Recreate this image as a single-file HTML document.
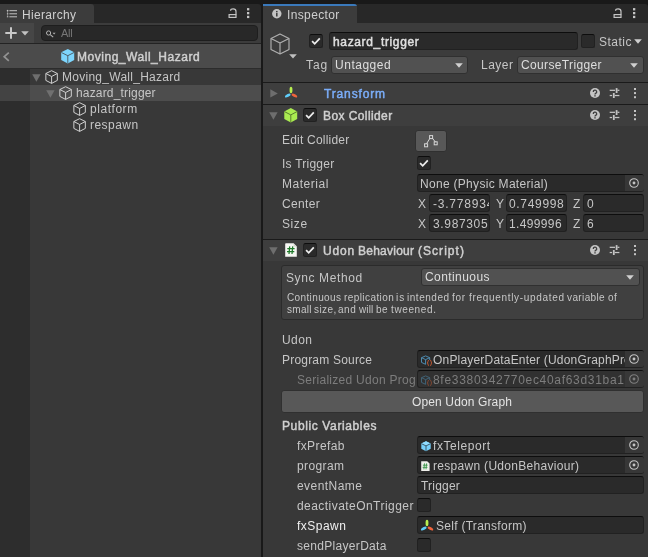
<!DOCTYPE html>
<html><head><meta charset="utf-8"><title>Unity Inspector</title>
<style>
html,body{margin:0;padding:0;}
body{width:648px;height:557px;position:relative;overflow:hidden;background:#383838;font-family:'Liberation Sans',sans-serif;}
.b{position:absolute;box-sizing:border-box;}
.t{position:absolute;will-change:transform;white-space:pre;line-height:16px;font-family:'Liberation Sans',sans-serif;}
.clip{position:absolute;left:0;top:0;height:557px;overflow:hidden;}
svg{position:absolute;overflow:visible;}
.fld{position:absolute;box-sizing:border-box;background:#2a2a2a;border:1px solid #212121;border-top-color:#0d0d0d;border-radius:3px;}
.dd{position:absolute;box-sizing:border-box;background:#515151;border:1px solid #303030;border-radius:3px;}
.cb{position:absolute;box-sizing:border-box;width:14px;height:14px;background:#2a2a2a;border:1px solid #212121;border-top-color:#0d0d0d;border-radius:2.5px;}
.pick{position:absolute;box-sizing:border-box;width:18.5px;height:16px;background:#373737;border-radius:0 2px 2px 0;}
.hline{position:absolute;left:263px;width:385px;height:1px;background:#1a1a1a;}
.chead{position:absolute;left:263px;width:385px;background:#3e3e3e;}

</style></head>
<body>
<!-- global bars -->
<div class="b" style="left:0;top:0;width:648px;height:23px;background:#191919"></div>
<div class="b" style="left:0;top:4px;width:261px;height:19px;background:#282828;border-radius:0 3px 0 0"></div>
<div class="b" style="left:263px;top:4px;width:385px;height:19px;background:#282828;border-radius:0 3px 0 0"></div>

<!-- HIERARCHY -->
<div class="b" style="left:0;top:4px;width:93.5px;height:19px;background:#3c3c3c;border-radius:0 3px 0 0"></div>
<div class="b" style="left:0;top:23px;width:261px;height:20px;background:#3c3c3c"></div>
<div class="b" style="left:0;top:23px;width:34px;height:20px;background:#464646"></div>
<div class="b" style="left:0;top:43px;width:261px;height:1px;background:#232323"></div>
<div class="b" style="left:41px;top:25px;width:217px;height:16px;background:#282828;border:1px solid #1e1e1e;border-radius:4px"></div>
<div class="b" style="left:0;top:44px;width:261px;height:24px;background:#4b4b4b"></div>
<div class="b" style="left:0;top:68px;width:261px;height:1px;background:#2c2c2c"></div>
<div class="b" style="left:0;top:69px;width:261px;height:488px;background:#383838"></div>
<div class="b" style="left:0;top:69px;width:30px;height:488px;background:#2d2d2d"></div>
<div class="b" style="left:0;top:85px;width:261px;height:16px;background:#4d4d4d"></div>
<div class="b" style="left:0;top:85px;width:30px;height:16px;background:#434343"></div>
<!-- divider -->
<div class="b" style="left:261px;top:4px;width:2px;height:553px;background:#191919"></div>

<!-- hierarchy tab icon -->
<svg style="left:6px;top:9px" width="12" height="10" viewBox="0 0 12 10"><g stroke="#c4c4c4" stroke-width="1" fill="none"><path d="M3.4 1.7H11M3.4 4.8H11M3.4 7.8H11"/><path d="M0.8 1.7H2.4M1.6 0.9V2.5M0.9 4.8H2.3M0.9 7.8H2.3" /><path d="M1.6 2.5V7.8" stroke-opacity=".45"/></g></svg>
<!-- plus -->
<svg style="left:5px;top:27px" width="12" height="12" viewBox="0 0 12 12"><path d="M6 0.3V11.7M0.3 6H11.7" stroke="#c8c8c8" stroke-width="2" fill="none"/></svg>
<svg style="left:21.2px;top:30.8px" width="8" height="5" viewBox="0 0 8 5"><path d="M0.2 0.2H7.8L4 4.6Z" fill="#c2c2c2"/></svg>
<!-- search icon -->
<svg style="left:45.5px;top:29.5px" width="10" height="8" viewBox="0 0 10 8"><circle cx="2.6" cy="3" r="2.1" stroke="#b4b4b4" stroke-width="1" fill="none"/><path d="M4.2 4.6L7.2 7.2" stroke="#b4b4b4" stroke-width="1.1"/><path d="M6.6 2.7H9.6L8.1 4.5Z" fill="#b4b4b4"/></svg>
<!-- lock -->
<svg style="left:227.9px;top:7.7px" width="9" height="10" viewBox="0 0 9 10"><rect x="1.1" y="6.6" width="6.9" height="2.8" stroke="#c4c4c4" stroke-width="1.2" fill="none"/><path d="M2.5 2.7Q2.7 0.9 5.1 0.9Q8 0.9 8 3.4V6.6" stroke="#c4c4c4" stroke-width="1.2" fill="none"/></svg>
<!-- kebab -->
<svg style="left:247px;top:7.9px" width="3" height="11" viewBox="0 0 3 11"><g fill="#c4c4c4"><rect x="0" y="0.1" width="2.3" height="2.3"/><rect x="0" y="4" width="2.3" height="2.3"/><rect x="0" y="7.8" width="2.3" height="2.3"/></g></svg>
<!-- back arrow -->
<svg style="left:3px;top:52px" width="7" height="10" viewBox="0 0 7 10"><path d="M5.8 0.6L1.2 4.7L5.8 8.8" stroke="#939393" stroke-width="1.7" fill="none"/></svg>
<!-- prefab blue cube -->
<svg style="left:60.6px;top:48.8px" width="13.6" height="14.5" viewBox="0 0 14 14.5" preserveAspectRatio="none"><path d="M7 0.1L13.6 3.3V10.9L7 14.4L0.2 10.9V3.3Z" fill="#7dd5fd"/><path d="M0.4 3.5L7 6.7L13.4 3.5M7 6.7V14.2" stroke="#46525a" stroke-width="0.9" fill="none"/></svg>

<!-- tree rows: foldouts + cube icons -->
<svg style="left:32px;top:74.3px" width="9" height="8" viewBox="0 0 9 8"><path d="M0.2 0.3H8.6L4.4 7.8Z" fill="#6e6e6e"/></svg>
<svg style="left:46px;top:90.3px" width="9" height="8" viewBox="0 0 9 8"><path d="M0.2 0.3H8.6L4.4 7.8Z" fill="#707070"/></svg>
<svg class="oc" style="left:44.8px;top:70px" width="13.2" height="14" viewBox="0 0 14 14" preserveAspectRatio="none"><use href="#ocube"/></svg>
<svg class="oc" style="left:58.8px;top:86px" width="13.2" height="14" viewBox="0 0 14 14" preserveAspectRatio="none"><use href="#ocube"/></svg>
<svg class="oc" style="left:72.8px;top:102px" width="13.2" height="14" viewBox="0 0 14 14" preserveAspectRatio="none"><use href="#ocube"/></svg>
<svg class="oc" style="left:72.8px;top:118px" width="13.2" height="14" viewBox="0 0 14 14" preserveAspectRatio="none"><use href="#ocube"/></svg>
<svg width="0" height="0" style="left:0;top:0"><defs>
 <g id="ocube" fill="none" stroke="#d4d4d4" stroke-width="1" stroke-linejoin="round"><path d="M7 0.7L13.1 3.5V10.4L7 13.4L0.9 10.4V3.5Z"/><path d="M0.9 3.5L7 6.5L13.1 3.5M7 6.5V13.4"/></g>
 <g id="chk" fill="none" stroke="#ececec" stroke-width="1.75"><path d="M3.1 7.1L5.7 9.8L10.8 4.3"/></g>
 <g id="help"><circle cx="5" cy="5" r="5" fill="#c4c4c4"/><path d="M3.3 4A1.7 1.7 0 1 1 5.6 5.4Q5 5.8 5 6.5" stroke="#3e3e3e" stroke-width="1.3" fill="none"/><rect x="4.3" y="7.2" width="1.4" height="1.3" fill="#3e3e3e"/></g>
 <g id="sliders" fill="#c4c4c4"><rect x="0.7" y="1.7" width="5.3" height="1.25"/><rect x="6.7" y="0.1" width="1.8" height="4.9"/><rect x="8.5" y="1.7" width="1.9" height="1.25"/><rect x="0.7" y="6.9" width="2.4" height="1.25"/><rect x="3.9" y="5" width="1.8" height="5"/><rect x="5.7" y="6.9" width="4.7" height="1.25"/></g>
 <g id="kebab" fill="#c4c4c4"><rect x="0" y="0" width="2" height="2"/><rect x="0" y="4.1" width="2" height="2"/><rect x="0" y="8.2" width="2" height="2"/></g>
 <g id="picker"><circle cx="5" cy="5" r="4.3" stroke="#c4c4c4" stroke-width="1.1" fill="none"/><circle cx="5" cy="5" r="1.45" fill="#c4c4c4"/></g>
 <g id="xform"><ellipse cx="6" cy="3.95" rx="1.45" ry="3.2" fill="#b9f050"/><ellipse cx="2.75" cy="9.6" rx="3.15" ry="1.4" transform="rotate(-27 2.75 9.6)" fill="#5fcdfa"/><ellipse cx="9.45" cy="9.6" rx="3.15" ry="1.4" transform="rotate(27 9.45 9.6)" fill="#f0643c"/></g>
 <g id="ddarrow"><path d="M0.2 0.2H7.8L4 4.8Z" fill="#d0d0d0"/></g>
</defs></svg>

<!-- INSPECTOR -->
<div class="b" style="left:263px;top:4px;width:93.5px;height:19px;background:#3c3c3c;border-radius:0 3px 0 0;overflow:hidden"><div style="height:2px;background:#3a79bb"></div></div>
<div class="b" style="left:263px;top:23px;width:385px;height:59px;background:#3c3c3c"></div>
<div class="hline" style="top:82px"></div>
<div class="chead" style="top:83px;height:21px"></div>
<div class="hline" style="top:104px"></div>
<div class="chead" style="top:105px;height:21px"></div>
<div class="hline" style="top:239px"></div>
<div class="chead" style="top:240px;height:21px"></div>

<!-- info icon -->
<svg style="left:272.3px;top:9px" width="9.6" height="9.6" viewBox="0 0 10 10"><circle cx="5" cy="5" r="4.9" fill="#c4c4c4"/><rect x="4.2" y="4.2" width="1.6" height="3.6" fill="#3c3c3c"/><rect x="4.2" y="2" width="1.6" height="1.5" fill="#3c3c3c"/></svg>
<!-- lock / kebab -->
<svg style="left:613.3px;top:7.7px" width="9" height="10" viewBox="0 0 9 10"><rect x="1.1" y="6.6" width="6.9" height="2.8" stroke="#c4c4c4" stroke-width="1.2" fill="none"/><path d="M2.5 2.7Q2.7 0.9 5.1 0.9Q8 0.9 8 3.4V6.6" stroke="#c4c4c4" stroke-width="1.2" fill="none"/></svg>
<svg style="left:632.9px;top:7.9px" width="3" height="11" viewBox="0 0 3 11"><g fill="#c4c4c4"><rect x="0" y="0.1" width="2.3" height="2.3"/><rect x="0" y="4" width="2.3" height="2.3"/><rect x="0" y="7.8" width="2.3" height="2.3"/></g></svg>
<!-- big cube -->
<svg style="left:269.8px;top:33px" width="20" height="22" viewBox="0 0 20 22"><g fill="none" stroke="#b0b0b0" stroke-width="1.15" stroke-linejoin="round"><path d="M10 1L19 5.4V16.4L10 21L1 16.4V5.4Z"/><path d="M1 5.4L10 10L19 5.4M10 10V21"/></g></svg>
<svg style="left:288.7px;top:54px" width="8" height="5" viewBox="0 0 8 5"><path d="M0.2 0.2H7.8L4 4.6Z" fill="#c0c0c0"/></svg>
<!-- GO checkbox -->
<div class="cb" style="left:309px;top:34px"></div>
<svg style="left:309px;top:34px" width="14" height="14" viewBox="0 0 14 14"><use href="#chk"/></svg>
<!-- name field -->
<div class="fld" style="left:329px;top:32px;width:249px;height:18px"></div>
<!-- static -->
<div class="cb" style="left:581px;top:34px"></div>
<svg style="left:634px;top:39px" width="8" height="5" viewBox="0 0 8 5"><use href="#ddarrow"/></svg>
<!-- tag/layer -->
<div class="dd" style="left:331px;top:56px;width:137px;height:18px"></div>
<svg style="left:454.5px;top:63px" width="8" height="5" viewBox="0 0 8 5"><use href="#ddarrow"/></svg>
<div class="dd" style="left:517px;top:56px;width:127px;height:18px"></div>
<svg style="left:630px;top:63px" width="8" height="5" viewBox="0 0 8 5"><use href="#ddarrow"/></svg>

<!-- Transform header -->
<svg style="left:270px;top:89px" width="8" height="9" viewBox="0 0 8 9"><path d="M0.3 0.2V8.6L7.8 4.4Z" fill="#6e6e6e"/></svg>
<svg style="left:285px;top:86px" width="13" height="12" viewBox="0 0 13 12"><use href="#xform"/></svg>
<svg style="left:590px;top:88px" width="10" height="10" viewBox="0 0 10 10"><use href="#help"/></svg>
<svg style="left:608.8px;top:88px" width="11" height="10" viewBox="0 0 11 10"><use href="#sliders"/></svg>
<svg style="left:633.8px;top:88px" width="2" height="11" viewBox="0 0 2 11"><use href="#kebab"/></svg>

<!-- Box Collider header -->
<svg style="left:269px;top:112px" width="9" height="8" viewBox="0 0 9 8"><path d="M0.2 0.3H8.6L4.4 7.8Z" fill="#6e6e6e"/></svg>
<svg style="left:283.6px;top:107.7px" width="13.6" height="14.6" viewBox="0 0 14 14.6" preserveAspectRatio="none"><path d="M7 0.1L13.6 3.4V11L7 14.5L0.3 11V3.4Z" fill="#aaeb50"/><path d="M0.5 3.6L7 6.9L13.4 3.6M7 6.9V14.3" stroke="#4f6e2c" stroke-width="0.9" fill="none"/></svg>
<div class="cb" style="left:303px;top:108px"></div>
<svg style="left:303px;top:108px" width="14" height="14" viewBox="0 0 14 14"><use href="#chk"/></svg>
<svg style="left:590px;top:110px" width="10" height="10" viewBox="0 0 10 10"><use href="#help"/></svg>
<svg style="left:608.8px;top:110px" width="11" height="10" viewBox="0 0 11 10"><use href="#sliders"/></svg>
<svg style="left:633.8px;top:110px" width="2" height="11" viewBox="0 0 2 11"><use href="#kebab"/></svg>

<!-- BC body -->
<div class="b" style="left:415px;top:130px;width:32px;height:22px;background:#585858;border:1px solid #303030;border-radius:3px"></div>
<svg style="left:424px;top:134.5px" width="14" height="13" viewBox="0 0 14 13"><g stroke="#d8d8d8" stroke-width="1" fill="none"><path d="M2.5 8.8L6 3.2M8.4 3.2L11.5 7.2"/><rect x="5.6" y="0.6" width="3" height="3"/><rect x="0.6" y="8.8" width="3" height="3"/><rect x="10.2" y="6.8" width="3" height="3"/></g></svg>
<div class="cb" style="left:417px;top:156px"></div>
<svg style="left:417px;top:156px" width="14" height="14" viewBox="0 0 14 14"><use href="#chk"/></svg>
<div class="fld" style="left:417px;top:174px;width:227px;height:18px"></div>
<div class="pick" style="left:625px;top:175px"></div>
<svg style="left:629px;top:178px" width="10" height="10" viewBox="0 0 10 10"><use href="#picker"/></svg>
<div class="fld" style="left:429px;top:194px;width:61px;height:18px"></div>
<div class="fld" style="left:506px;top:194px;width:61px;height:18px"></div>
<div class="fld" style="left:583px;top:194px;width:61px;height:18px"></div>
<div class="fld" style="left:429px;top:214px;width:61px;height:18px"></div>
<div class="fld" style="left:506px;top:214px;width:61px;height:18px"></div>
<div class="fld" style="left:583px;top:214px;width:61px;height:18px"></div>

<!-- Udon header -->
<svg style="left:269px;top:246.5px" width="9" height="8" viewBox="0 0 9 8"><path d="M0.2 0.3H8.6L4.4 7.8Z" fill="#6e6e6e"/></svg>
<svg style="left:285px;top:242.8px" width="12" height="14" viewBox="0 0 12 14"><path d="M0.9 0.2H8.6L11.8 3.4V13.8H0.2V0.9Q0.2 0.2 0.9 0.2Z" fill="#f6f6f3"/><path d="M8.6 0.2V3.4H11.8Z" fill="#cfcfca"/><g stroke="#1f7a2a" stroke-width="1.25" fill="none"><path d="M4.7 3.4L4 11M7.7 3.4L7 11M2.3 5.7H9.6M2 8.7H9.3"/></g></svg>
<div class="cb" style="left:303px;top:243px"></div>
<svg style="left:303px;top:243px" width="14" height="14" viewBox="0 0 14 14"><use href="#chk"/></svg>
<svg style="left:590px;top:245px" width="10" height="10" viewBox="0 0 10 10"><use href="#help"/></svg>
<svg style="left:608.8px;top:245px" width="11" height="10" viewBox="0 0 11 10"><use href="#sliders"/></svg>
<svg style="left:633.8px;top:245px" width="2" height="11" viewBox="0 0 2 11"><use href="#kebab"/></svg>

<!-- help box -->
<div class="b" style="left:281px;top:265px;width:362.5px;height:54.5px;background:#404040;border:1px solid #2b2b2b;border-radius:3px"></div>
<div class="dd" style="left:421px;top:268px;width:219px;height:18px"></div>
<svg style="left:626px;top:275px" width="8" height="5" viewBox="0 0 8 5"><use href="#ddarrow"/></svg>

<!-- Udon fields -->
<div class="fld" style="left:417px;top:350px;width:227px;height:18px"></div>
<div class="pick" style="left:625px;top:351px"></div>
<svg style="left:629px;top:354px" width="10" height="10" viewBox="0 0 10 10"><use href="#picker"/></svg>
<div class="fld" style="left:417px;top:370px;width:227px;height:18px;background:#313131"></div>
<div class="pick" style="left:625px;top:371px;background:#383838"></div>
<svg style="left:629px;top:374px;opacity:.5" width="10" height="10" viewBox="0 0 10 10"><use href="#picker"/></svg>
<svg style="left:421px;top:354.5px" width="12" height="11" viewBox="0 0 12 11"><use href="#udonasset"/></svg>
<svg style="left:421px;top:374.5px;opacity:.55" width="12" height="11" viewBox="0 0 12 11"><use href="#udonasset"/></svg>
<svg width="0" height="0" style="left:0;top:0"><defs>
 <g id="udonasset" fill="none"><g stroke="#4f8fb6" stroke-width="0.95" stroke-linejoin="round"><path d="M4.6 0.9L8.7 2.7V5M4.6 0.9L0.5 2.7V7.4L4.6 9.3V4.6L8.7 2.7M0.5 2.7L4.6 4.6"/></g><g stroke="#cf5c33" stroke-width="0.95"><path d="M7.9 5.3Q6.9 5.3 7 6.4Q7.1 7.7 6.1 7.9Q7.1 8.1 7 9.4Q6.9 10.5 7.9 10.5M9.2 5.3Q10.2 5.3 10.1 6.4Q10 7.7 11 7.9Q10 8.1 10.1 9.4Q10.2 10.5 9.2 10.5"/></g></g>
 <g id="pfcube"><path d="M5 0.2L9.7 2.5V7.8L5 10.2L0.3 7.8V2.5Z" fill="#78d0fb"/><path d="M5 0.2L9.7 2.5L5 4.9L0.3 2.5Z" fill="#8fdcff"/><path d="M0.5 2.7L5 4.9L9.5 2.7M5 4.9V10" stroke="#2a3f4c" stroke-width="0.8" fill="none"/></g>
 <g id="smscript"><path d="M0.2 0.2H6.2L8.6 2.6V9.9H0.2Z" fill="#efefea"/><g stroke="#3a9448" stroke-width="0.9" fill="none"><path d="M3.5 2.4L2.9 8.3M5.6 2.4L5 8.3M1.9 4.2H6.6M1.7 6.4H6.4"/></g></g>
</defs></svg>

<!-- button -->
<div class="b" style="left:281px;top:390px;width:363px;height:23px;background:#585858;border:1px solid #303030;border-radius:3px"></div>

<!-- public variables -->
<div class="fld" style="left:417px;top:436px;width:227px;height:18px"></div>
<div class="pick" style="left:625px;top:437px"></div>
<svg style="left:629px;top:440px" width="10" height="10" viewBox="0 0 10 10"><use href="#picker"/></svg>
<svg style="left:420.8px;top:440.8px" width="10" height="10" viewBox="0 0 10 10"><use href="#pfcube"/></svg>
<div class="fld" style="left:417px;top:456px;width:227px;height:18px"></div>
<div class="pick" style="left:625px;top:457px"></div>
<svg style="left:629px;top:460px" width="10" height="10" viewBox="0 0 10 10"><use href="#picker"/></svg>
<svg style="left:421.4px;top:460.8px" width="9" height="10" viewBox="0 0 9 10"><use href="#smscript"/></svg>
<div class="fld" style="left:417px;top:476px;width:227px;height:18px"></div>
<div class="cb" style="left:417px;top:497.5px"></div>
<div class="fld" style="left:417px;top:516px;width:227px;height:18px"></div>
<svg style="left:421.3px;top:519.2px" width="13" height="12" viewBox="0 0 13 12"><use href="#xform"/></svg>
<div class="cb" style="left:417px;top:537.5px"></div>

<span class="t" style="left:22.0px;top:7px;font-size:12px;font-weight:400;color:#cfcfcf;letter-spacing:0.33px">Hierarchy</span>
<span class="t" style="left:61.0px;top:25px;font-size:11px;font-weight:400;color:#777777;letter-spacing:-0.27px">All</span>
<span class="t" style="left:77.0px;top:49px;font-size:12px;font-weight:400;-webkit-text-stroke:0.45px #d0d0d0;color:#d0d0d0;letter-spacing:0.53px">Moving_Wall_Hazard</span>
<span class="t" style="left:62.0px;top:69px;font-size:12px;font-weight:400;color:#c6c6c6;letter-spacing:0.27px">Moving_Wall_Hazard</span>
<span class="t" style="left:76.0px;top:85px;font-size:12px;font-weight:400;color:#c6c6c6;letter-spacing:0.17px">hazard_trigger</span>
<span class="t" style="left:90.0px;top:101px;font-size:12px;font-weight:400;color:#c6c6c6;letter-spacing:0.54px">platform</span>
<span class="t" style="left:90.0px;top:117px;font-size:12px;font-weight:400;color:#c6c6c6;letter-spacing:0.46px">respawn</span>
<span class="t" style="left:287.0px;top:7px;font-size:12px;font-weight:400;color:#cfcfcf;letter-spacing:0.37px">Inspector</span>
<span class="t" style="left:333.0px;top:34px;font-size:12px;font-weight:400;-webkit-text-stroke:0.45px #e0e0e0;color:#e0e0e0;letter-spacing:0.65px">hazard_trigger</span>
<span class="t" style="left:599.0px;top:34px;font-size:12px;font-weight:400;color:#c6c6c6;letter-spacing:0.49px">Static</span>
<span class="t" style="left:306.0px;top:57px;font-size:12px;font-weight:400;color:#c6c6c6;letter-spacing:0.89px">Tag</span>
<span class="t" style="left:335.0px;top:57px;font-size:12px;font-weight:400;color:#dedede;letter-spacing:0.52px">Untagged</span>
<span class="t" style="left:481.0px;top:57px;font-size:12px;font-weight:400;color:#c6c6c6;letter-spacing:0.48px">Layer</span>
<span class="t" style="left:521.0px;top:57px;font-size:12px;font-weight:400;color:#dedede;letter-spacing:0.36px">CourseTrigger</span>
<span class="t" style="left:324.0px;top:86px;font-size:12px;font-weight:400;-webkit-text-stroke:0.45px #7baefa;color:#7baefa;letter-spacing:0.85px">Transform</span>
<span class="t" style="left:323.0px;top:108px;font-size:12px;font-weight:400;-webkit-text-stroke:0.45px #d0d0d0;color:#d0d0d0;letter-spacing:0.41px">Box Collider</span>
<span class="t" style="left:282.0px;top:132px;font-size:12px;font-weight:400;color:#c6c6c6;letter-spacing:0.21px">Edit Collider</span>
<span class="t" style="left:282.0px;top:156px;font-size:12px;font-weight:400;color:#c6c6c6;letter-spacing:0.24px">Is Trigger</span>
<span class="t" style="left:282.0px;top:176px;font-size:12px;font-weight:400;color:#c6c6c6;letter-spacing:0.52px">Material</span>
<span class="t" style="left:282.0px;top:196px;font-size:12px;font-weight:400;color:#c6c6c6;letter-spacing:0.34px">Center</span>
<span class="t" style="left:282.0px;top:216px;font-size:12px;font-weight:400;color:#c6c6c6;letter-spacing:0.57px">Size</span>
<span class="t" style="left:420.0px;top:176px;font-size:12px;font-weight:400;color:#c6c6c6;letter-spacing:0.30px">None (Physic Material)</span>
<span class="t" style="left:418.0px;top:196px;font-size:12px;font-weight:400;color:#c6c6c6;letter-spacing:-0.80px">X</span>
<span class="t" style="left:496.0px;top:196px;font-size:12px;font-weight:400;color:#c6c6c6;letter-spacing:-1.20px">Y</span>
<span class="t" style="left:573.0px;top:196px;font-size:12px;font-weight:400;color:#c6c6c6;letter-spacing:-0.20px">Z</span>
<span class="t" style="left:418.0px;top:216px;font-size:12px;font-weight:400;color:#c6c6c6;letter-spacing:-0.80px">X</span>
<span class="t" style="left:496.0px;top:216px;font-size:12px;font-weight:400;color:#c6c6c6;letter-spacing:-1.20px">Y</span>
<span class="t" style="left:573.0px;top:216px;font-size:12px;font-weight:400;color:#c6c6c6;letter-spacing:-0.20px">Z</span>
<div class="clip" style="width:488.5px"><span class="t" style="left:433.0px;top:196px;font-size:12px;font-weight:400;color:#c6c6c6;letter-spacing:0.79px">-3.778934</span></div>
<span class="t" style="left:433.0px;top:216px;font-size:12px;font-weight:400;color:#c6c6c6;letter-spacing:0.65px">3.987305</span>
<span class="t" style="left:509.0px;top:196px;font-size:12px;font-weight:400;color:#c6c6c6;letter-spacing:0.67px">0.749998</span>
<span class="t" style="left:509.0px;top:216px;font-size:12px;font-weight:400;color:#c6c6c6;letter-spacing:0.36px">1.499996</span>
<span class="t" style="left:587.0px;top:196px;font-size:12px;font-weight:400;color:#c6c6c6;letter-spacing:0.10px">0</span>
<span class="t" style="left:587.0px;top:216px;font-size:12px;font-weight:400;color:#c6c6c6;letter-spacing:0.10px">6</span>
<span class="t" style="left:323.0px;top:243px;font-size:12px;font-weight:400;-webkit-text-stroke:0.45px #d0d0d0;color:#d0d0d0;letter-spacing:0.83px">Udon </span>
<span class="t" style="left:358.0px;top:243px;font-size:12px;font-weight:400;-webkit-text-stroke:0.45px #d0d0d0;color:#d0d0d0;letter-spacing:0.24px">Behaviour </span>
<span class="t" style="left:418.0px;top:243px;font-size:12px;font-weight:400;-webkit-text-stroke:0.45px #d0d0d0;color:#d0d0d0;letter-spacing:1.04px">(Script)</span>
<span class="t" style="left:286.0px;top:270px;font-size:12px;font-weight:400;color:#c6c6c6;letter-spacing:0.61px">Sync Method</span>
<span class="t" style="left:425.0px;top:269px;font-size:12px;font-weight:400;color:#dedede;letter-spacing:0.42px">Continuous</span>
<span class="t" style="left:287.0px;top:290px;font-size:10px;font-weight:400;color:#c6c6c6;letter-spacing:0.37px">Continuous </span>
<span class="t" style="left:344.0px;top:290px;font-size:10px;font-weight:400;color:#c6c6c6;letter-spacing:0.42px">replication </span>
<span class="t" style="left:396.0px;top:290px;font-size:10px;font-weight:400;color:#c6c6c6;letter-spacing:0.94px">is </span>
<span class="t" style="left:407.0px;top:290px;font-size:10px;font-weight:400;color:#c6c6c6;letter-spacing:0.53px">intended </span>
<span class="t" style="left:452.0px;top:290px;font-size:10px;font-weight:400;color:#c6c6c6;letter-spacing:0.75px">for </span>
<span class="t" style="left:469.0px;top:290px;font-size:10px;font-weight:400;color:#c6c6c6;letter-spacing:0.68px">frequently-updated </span>
<span class="t" style="left:567.0px;top:290px;font-size:10px;font-weight:400;color:#c6c6c6;letter-spacing:0.38px">variable </span>
<span class="t" style="left:608.0px;top:290px;font-size:10px;font-weight:400;color:#c6c6c6;letter-spacing:0.54px">of</span>
<span class="t" style="left:287.0px;top:302px;font-size:10px;font-weight:400;color:#c6c6c6;letter-spacing:0.30px">small </span>
<span class="t" style="left:314.0px;top:302px;font-size:10px;font-weight:400;color:#c6c6c6;letter-spacing:0.40px">size, </span>
<span class="t" style="left:338.0px;top:302px;font-size:10px;font-weight:400;color:#c6c6c6;letter-spacing:0.55px">and </span>
<span class="t" style="left:359.0px;top:302px;font-size:10px;font-weight:400;color:#c6c6c6;letter-spacing:0.14px">will </span>
<span class="t" style="left:376.0px;top:302px;font-size:10px;font-weight:400;color:#c6c6c6;letter-spacing:0.55px">be </span>
<span class="t" style="left:391.0px;top:302px;font-size:10px;font-weight:400;color:#c6c6c6;letter-spacing:0.62px">tweened.</span>
<span class="t" style="left:282.0px;top:332px;font-size:12px;font-weight:400;color:#c6c6c6;letter-spacing:0.41px">Udon</span>
<span class="t" style="left:282.0px;top:352px;font-size:12px;font-weight:400;color:#c6c6c6;letter-spacing:0.20px">Program Source</span>
<span class="t" style="left:297.0px;top:372px;font-size:12px;font-weight:400;color:#7d7d7d;letter-spacing:0.28px">Serialized Udon Prog</span>
<div class="clip" style="width:624.5px"><span class="t" style="left:433.0px;top:352px;font-size:12px;font-weight:400;color:#c6c6c6;letter-spacing:0.19px">OnPlayerDataEnter (UdonGraphProgramAsset)</span></div>
<div class="clip" style="width:624.5px"><span class="t" style="left:433.0px;top:372px;font-size:12px;font-weight:400;color:#7d7d7d;letter-spacing:0.70px">8fe3380342770ec40af63d31ba13c6f2</span></div>
<span class="t" style="left:412.0px;top:394px;font-size:12px;font-weight:400;color:#e4e4e4;letter-spacing:0.13px">Open Udon Graph</span>
<span class="t" style="left:282.0px;top:418px;font-size:12px;font-weight:400;-webkit-text-stroke:0.45px #d0d0d0;color:#d0d0d0;letter-spacing:0.62px">Public Variables</span>
<span class="t" style="left:297.0px;top:438px;font-size:12px;font-weight:400;color:#c6c6c6;letter-spacing:0.39px">fxPrefab</span>
<span class="t" style="left:297.0px;top:458px;font-size:12px;font-weight:400;color:#c6c6c6;letter-spacing:0.39px">program</span>
<span class="t" style="left:297.0px;top:478px;font-size:12px;font-weight:400;color:#c6c6c6;letter-spacing:0.44px">eventName</span>
<span class="t" style="left:297.0px;top:498px;font-size:12px;font-weight:400;color:#c6c6c6;letter-spacing:0.45px">deactivateOnTrigger</span>
<span class="t" style="left:297.0px;top:518px;font-size:12px;font-weight:400;color:#f0f0f0;letter-spacing:0.48px">fxSpawn</span>
<span class="t" style="left:297.0px;top:538px;font-size:12px;font-weight:400;color:#c6c6c6;letter-spacing:0.31px">sendPlayerData</span>
<span class="t" style="left:433.0px;top:438px;font-size:12px;font-weight:400;color:#c6c6c6;letter-spacing:0.57px">fxTeleport</span>
<span class="t" style="left:433.0px;top:458px;font-size:12px;font-weight:400;color:#c6c6c6;letter-spacing:0.30px">respawn (UdonBehaviour)</span>
<span class="t" style="left:421.0px;top:478px;font-size:12px;font-weight:400;color:#c6c6c6;letter-spacing:0.20px">Trigger</span>
<span class="t" style="left:436.0px;top:518px;font-size:12px;font-weight:400;color:#c6c6c6;letter-spacing:0.28px">Self (Transform)</span>
</body></html>
